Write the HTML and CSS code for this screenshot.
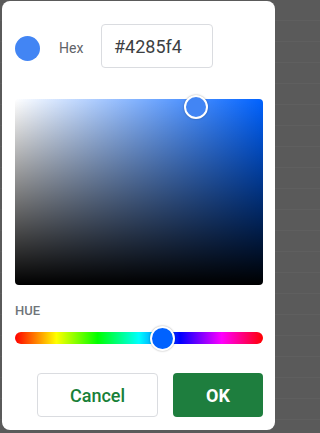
FILE: index.html
```html
<!DOCTYPE html>
<html>
<head>
<meta charset="utf-8">
<link rel="stylesheet" href="styles.css">
</head>
<body>
<div class="dialog">
  <div class="top-row">
    <div class="swatch"></div>
    <div class="hex-label">Hex</div>
    <div class="hex-input">#4285f4</div>
  </div>
  <div class="sat-box">
    <div class="sat-handle"></div>
  </div>
  <div class="hue-label">HUE</div>
  <div class="hue-track">
    <div class="hue-handle"></div>
  </div>
  <div class="actions">
    <button class="btn btn-cancel">Cancel</button>
    <button class="btn btn-ok">OK</button>
  </div>
</div>
</body>
</html>
```
FILE: styles.css
```css
html, body {
  margin: 0;
  padding: 0;
}
body {
  width: 279px;
  height: 433px;
  overflow: hidden;
  background-color: #5a5a5a;
  background-image: repeating-linear-gradient(to bottom, transparent 0, transparent 20px, #5f5f5f 20px, #5f5f5f 21px);
  font-family: Roboto, "Liberation Sans", sans-serif;
  padding-top: 1px;
  padding-left: 2px;
  box-sizing: border-box;
}
.dialog {
  width: 273px;
  height: 429px;
  background: #fff;
  border-radius: 8px;
  box-sizing: border-box;
  padding: 23px 12px 0 13px;
  display: flex;
  flex-direction: column;
}
.top-row {
  display: flex;
  align-items: center;
  height: 44px;
}
.swatch {
  width: 25px;
  height: 25px;
  border-radius: 50%;
  background: #4285f4;
  margin-top: 4px;
  flex: none;
}
.hex-label {
  margin-left: 19px;
  margin-top: 3px;
  font-size: 14px;
  font-weight: 400;
  color: #5f6368;
  width: 24px;
}
.hex-input {
  margin-left: 18px;
  width: 112px;
  height: 44px;
  box-sizing: border-box;
  border: 1px solid #dadce0;
  border-radius: 4px;
  padding-left: 12px;
  font-size: 18px;
  color: #3c4043;
  display: flex;
  align-items: center;
}
.sat-box {
  position: relative;
  margin-top: 31px;
  width: 248px;
  height: 186px;
  border-radius: 4px;
  background: linear-gradient(to top, #000, rgba(0,0,0,0)), linear-gradient(to right, #fff, rgb(0, 98, 255));
}
.sat-handle {
  position: absolute;
  left: 169px;
  top: -4px;
  width: 24px;
  height: 24px;
  box-sizing: border-box;
  border-radius: 50%;
  border: 2px solid #fff;
  background: #4285f4;
  box-shadow: 0 0 2px rgba(0,0,0,0.35);
}
.hue-label {
  margin-top: 18px;
  font-size: 13px;
  line-height: 16px;
  font-weight: 500;
  color: #70757a;
}
.hue-track {
  position: relative;
  margin-top: 13px;
  width: 248px;
  height: 12px;
  border-radius: 6px;
  background: linear-gradient(to right, #f00 0%, #ff0 16.67%, #0f0 33.33%, #0ff 50%, #00f 66.67%, #f0f 83.33%, #f00 100%);
}
.hue-handle {
  position: absolute;
  left: 135px;
  top: -6.5px;
  width: 25px;
  height: 25px;
  box-sizing: border-box;
  border-radius: 50%;
  border: 2px solid #fff;
  background: rgb(0, 98, 255);
  box-shadow: 0 0 2px rgba(0,0,0,0.35);
}
.actions {
  margin-top: 29px;
  display: flex;
  justify-content: flex-end;
  gap: 15px;
}
.btn {
  height: 44px;
  border-radius: 4px;
  font-family: Roboto, "Liberation Sans", sans-serif;
  font-size: 18px;
  font-weight: 500;
  padding: 0;
  box-sizing: border-box;
  cursor: pointer;
}
.btn-cancel {
  width: 121px;
  background: #fff;
  border: 1px solid #dadce0;
  color: #188038;
}
.btn-ok {
  width: 90px;
  background: #1e7e3e;
  border: none;
  color: #fff;
  font-weight: 700;
}
```
